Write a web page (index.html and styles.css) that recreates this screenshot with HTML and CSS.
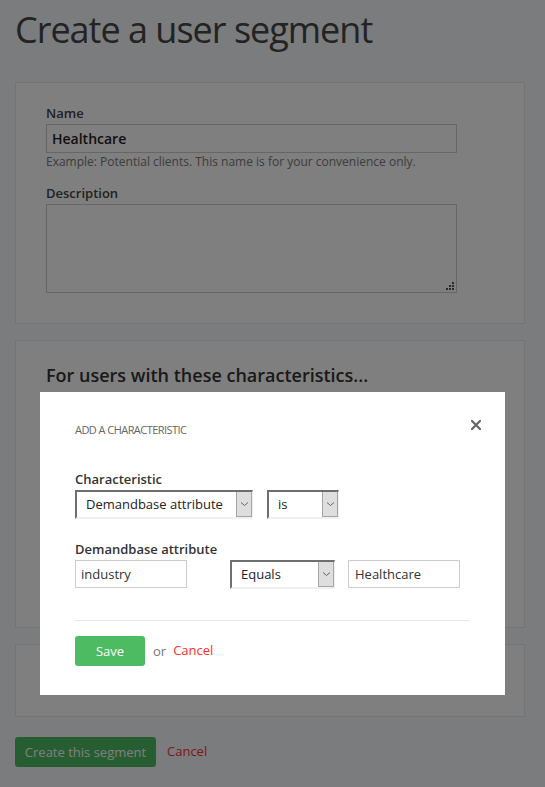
FILE: index.html
```html
<!DOCTYPE html>
<html lang="en">
<head>
    <meta charset="UTF-8">
    <meta name="viewport" content="width=device-width, initial-scale=1.0">
    <title>Create a user segment</title>
    <link rel="stylesheet" href="styles.css">
</head>
<body>
    <div class="page">
        <h1 class="page-title">Create a user segment</h1>

        <div class="panel panel-details">
            <div class="field">
                <label class="field-label">Name</label>
                <div class="text-input name-input">Healthcare</div>
                <div class="field-help">Example: Potential clients. This name is for your convenience only.</div>
            </div>
            <div class="field">
                <label class="field-label">Description</label>
                <div class="textarea">
                    <svg class="grip" width="8" height="8" viewBox="0 0 8 8">
                        <rect x="6" y="0" width="2" height="2" fill="#555"/>
                        <rect x="3" y="3" width="2" height="2" fill="#555"/>
                        <rect x="6" y="3" width="2" height="2" fill="#555"/>
                        <rect x="0" y="6" width="2" height="2" fill="#555"/>
                        <rect x="3" y="6" width="2" height="2" fill="#555"/>
                        <rect x="6" y="6" width="2" height="2" fill="#555"/>
                    </svg>
                </div>
            </div>
        </div>

        <div class="panel panel-rules">
            <h2 class="panel-title">For users with these characteristics...</h2>
        </div>

        <div class="panel panel-extra"></div>

        <div class="actions">
            <button class="btn btn-green btn-create">Create this segment</button>
            <a class="link-cancel" href="#">Cancel</a>
        </div>
    </div>

    <div class="overlay">
        <div class="modal">
            <div class="modal-head">
                <span class="modal-title">Add a characteristic</span>
                <svg class="modal-close" width="10" height="10" viewBox="0 0 10 10">
                    <path d="M1 1 L9 9 M9 1 L1 9" stroke="#666" stroke-width="2.2" stroke-linecap="square"/>
                </svg>
            </div>

            <div class="modal-field">
                <label class="modal-label">Characteristic</label>
                <div class="row">
                    <div class="select select-type">
                        <span class="select-value">Demandbase attribute</span>
                        <span class="select-arrow"><svg width="9" height="6" viewBox="0 0 9 6"><path d="M1 1.5 L4.5 4.5 L8 1.5" fill="none" stroke="#666" stroke-width="1"/></svg></span>
                    </div>
                    <div class="select select-is">
                        <span class="select-value">is</span>
                        <span class="select-arrow"><svg width="9" height="6" viewBox="0 0 9 6"><path d="M1 1.5 L4.5 4.5 L8 1.5" fill="none" stroke="#666" stroke-width="1"/></svg></span>
                    </div>
                </div>
            </div>

            <div class="modal-field">
                <label class="modal-label">Demandbase attribute</label>
                <div class="row">
                    <div class="text-input small-input">industry</div>
                    <div class="select select-op">
                        <span class="select-value">Equals</span>
                        <span class="select-arrow"><svg width="9" height="6" viewBox="0 0 9 6"><path d="M1 1.5 L4.5 4.5 L8 1.5" fill="none" stroke="#666" stroke-width="1"/></svg></span>
                    </div>
                    <div class="text-input small-input value-input">Healthcare</div>
                </div>
            </div>

            <div class="modal-foot">
                <button class="btn btn-green btn-save">Save</button>
                <span class="or">or</span>
                <a class="link-cancel" href="#">Cancel</a>
            </div>
        </div>
    </div>
</body>
</html>
```

FILE: styles.css
```css
body {
    margin: 0;
    font-family: 'Open Sans', 'Liberation Sans', Arial, sans-serif;
    background: #f7f8fb;
    color: #444;
}
.page {
    width: 510px;
    padding: 8px 0 19px 15px;
}
.page-title {
    margin: 0 0 31px 0;
    font-size: 36px;
    line-height: 43px;
    font-weight: 400;
    letter-spacing: -1px;
    color: #464646;
}
.panel {
    background: #fefefe;
    border: 1px solid #e8e8e8;
    padding: 0 30px;
    margin-bottom: 16px;
}
.panel-details {
    padding-top: 21px;
    padding-bottom: 30px;
}
.field + .field {
    margin-top: 14px;
}
.field-label {
    display: block;
    font-size: 13px;
    line-height: 18px;
    font-weight: 600;
    color: #444;
    margin-bottom: 2px;
}
.text-input {
    box-sizing: border-box;
    background: #fff;
    border: 1px solid #ccc;
    font-size: 13px;
    color: #333;
}
.name-input {
    width: 411px;
    height: 29px;
    line-height: 27px;
    padding-left: 5px;
    font-size: 14px;
    font-weight: 600;
    color: #222;
}
.field-help {
    font-size: 12px;
    line-height: 17px;
    color: #7a7a7a;
}
.textarea {
    position: relative;
    box-sizing: border-box;
    width: 411px;
    height: 89px;
    background: #fff;
    border: 1px solid #ccc;
}
.grip {
    position: absolute;
    right: 2px;
    bottom: 2px;
}
.panel-rules {
    height: 288px;
    box-sizing: border-box;
    padding-top: 20px;
}
.panel-title {
    margin: 0;
    font-size: 18px;
    line-height: 28px;
    font-weight: 600;
    color: #333;
}
.panel-extra {
    height: 73px;
    box-sizing: border-box;
}
.actions {
    display: flex;
    align-items: center;
    gap: 11px;
    margin-top: 20px;
}
.btn {
    border: none;
    border-radius: 3px;
    font-family: inherit;
    font-size: 13px;
    color: #fff;
    cursor: pointer;
}
.btn-green {
    background: #4cbb62;
}
.btn-create {
    width: 141px;
    height: 30px;
    padding: 0;
}
.link-cancel {
    font-size: 13px;
    color: #ff2e2e;
    text-decoration: none;
}
.actions .link-cancel {
    margin-top: -2px;
}

/* modal */
.overlay {
    position: fixed;
    top: 0; left: 0; width: 100vw; height: 100vh;
    background: rgba(0,0,0,0.5);
}
.modal {
    position: absolute;
    left: 40px;
    top: 392px;
    width: 465px;
    height: 303px;
    box-sizing: border-box;
    background: #fff;
    padding: 25px 35px 0 35px;
}
.modal-head {
    display: flex;
    justify-content: space-between;
    align-items: flex-start;
    height: 53px;
}
.modal-title {
    margin-top: 3px;
    font-size: 11px;
    line-height: 20px;
    text-transform: uppercase;
    color: #666;
    letter-spacing: -0.55px;
}
.modal-close {
    margin-top: 3px;
    margin-right: -11px;
}
.modal-label {
    display: block;
    font-size: 13px;
    line-height: 18px;
    font-weight: 600;
    color: #333;
    margin-bottom: 2px;
}
.modal-field + .modal-field {
    margin-top: 21px;
}
.row {
    display: flex;
    align-items: flex-start;
}
.select {
    box-sizing: border-box;
    display: flex;
    align-items: stretch;
    height: 29px;
    border-style: solid;
    border-width: 2px 1px 2px 2px;
    border-color: #6e6e6e #f0f0f0 #f0f0f0 #6e6e6e;
    background: #fff;
}
.select-value {
    flex: 1;
    padding-left: 9px;
    font-size: 13px;
    line-height: 25px;
    color: #222;
}
.select-arrow {
    width: 16px;
    display: flex;
    align-items: center;
    justify-content: center;
    background: #dedede;
    border: 1px solid #a5a5a5;
    border-top: none;
    box-sizing: border-box;
}
.select-type {
    width: 178px;
}
.select-is {
    width: 72px;
    margin-left: 14px;
}
.select-op {
    width: 105px;
    margin-left: 43px;
}
.small-input {
    width: 112px;
    height: 28px;
    line-height: 26px;
    padding-left: 5px;
}
.value-input {
    margin-left: 13px;
    padding-left: 6px;
}
.modal-foot {
    border-top: 1px solid #e5e5e5;
    margin-top: 31px;
    padding-top: 15px;
    display: flex;
    align-items: center;
}
.btn-save {
    width: 70px;
    height: 30px;
    padding: 0;
}
.or {
    font-size: 13px;
    color: #777;
    margin: 0 7px 0 8px;
}
.modal-foot .link-cancel {
    margin-top: -2px;
}
```
